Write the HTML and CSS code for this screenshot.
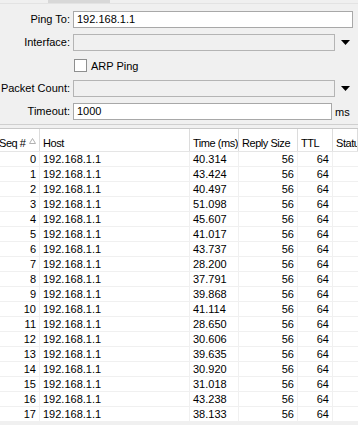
FILE: index.html
```html
<!DOCTYPE html>
<html>
<head>
<meta charset="utf-8">
<link rel="stylesheet" href="styles.css">
</head>
<body>
<div class="tabs"><div class="tab"></div></div>
<div class="form">
  <div class="lbl">Ping To:</div>
  <div class="field"><div class="input">192.168.1.1</div></div>

  <div class="lbl">Interface:</div>
  <div class="field"><div class="input disabled"></div><div class="dd"><svg width="9" height="5" viewBox="0 0 9 5"><path d="M0 0H9L4.5 5Z" fill="#000"/></svg></div></div>

  <div class="lbl"></div>
  <div class="field check"><span class="box"></span><span>ARP Ping</span></div>

  <div class="lbl">Packet Count:</div>
  <div class="field"><div class="input disabled"></div><div class="dd"><svg width="9" height="5" viewBox="0 0 9 5"><path d="M0 0H9L4.5 5Z" fill="#000"/></svg></div></div>

  <div class="lbl">Timeout:</div>
  <div class="field"><div class="input">1000</div><div class="unit">ms</div></div>
</div>
<div class="sep"></div>
<div class="list">
  <div class="row head">
    <div class="c seq">Seq #<svg class="sort" width="7" height="6" viewBox="0 0 7 6"><path d="M0.5 5.5H6.5L3.5 0.5Z" fill="none" stroke="#b0b0b0"/></svg></div>
    <div class="c host">Host</div>
    <div class="c time">Time (ms)</div>
    <div class="c size">Reply Size</div>
    <div class="c ttl">TTL</div>
    <div class="c status">Status</div>
  </div>
  <div class="row"><div class="c seq r">0</div><div class="c host">192.168.1.1</div><div class="c time">40.314</div><div class="c size r">56</div><div class="c ttl r">64</div><div class="c status"></div></div>
  <div class="row"><div class="c seq r">1</div><div class="c host">192.168.1.1</div><div class="c time">43.424</div><div class="c size r">56</div><div class="c ttl r">64</div><div class="c status"></div></div>
  <div class="row"><div class="c seq r">2</div><div class="c host">192.168.1.1</div><div class="c time">40.497</div><div class="c size r">56</div><div class="c ttl r">64</div><div class="c status"></div></div>
  <div class="row"><div class="c seq r">3</div><div class="c host">192.168.1.1</div><div class="c time">51.098</div><div class="c size r">56</div><div class="c ttl r">64</div><div class="c status"></div></div>
  <div class="row"><div class="c seq r">4</div><div class="c host">192.168.1.1</div><div class="c time">45.607</div><div class="c size r">56</div><div class="c ttl r">64</div><div class="c status"></div></div>
  <div class="row"><div class="c seq r">5</div><div class="c host">192.168.1.1</div><div class="c time">41.017</div><div class="c size r">56</div><div class="c ttl r">64</div><div class="c status"></div></div>
  <div class="row"><div class="c seq r">6</div><div class="c host">192.168.1.1</div><div class="c time">43.737</div><div class="c size r">56</div><div class="c ttl r">64</div><div class="c status"></div></div>
  <div class="row"><div class="c seq r">7</div><div class="c host">192.168.1.1</div><div class="c time">28.200</div><div class="c size r">56</div><div class="c ttl r">64</div><div class="c status"></div></div>
  <div class="row"><div class="c seq r">8</div><div class="c host">192.168.1.1</div><div class="c time">37.791</div><div class="c size r">56</div><div class="c ttl r">64</div><div class="c status"></div></div>
  <div class="row"><div class="c seq r">9</div><div class="c host">192.168.1.1</div><div class="c time">39.868</div><div class="c size r">56</div><div class="c ttl r">64</div><div class="c status"></div></div>
  <div class="row"><div class="c seq r">10</div><div class="c host">192.168.1.1</div><div class="c time">41.114</div><div class="c size r">56</div><div class="c ttl r">64</div><div class="c status"></div></div>
  <div class="row"><div class="c seq r">11</div><div class="c host">192.168.1.1</div><div class="c time">28.650</div><div class="c size r">56</div><div class="c ttl r">64</div><div class="c status"></div></div>
  <div class="row"><div class="c seq r">12</div><div class="c host">192.168.1.1</div><div class="c time">30.606</div><div class="c size r">56</div><div class="c ttl r">64</div><div class="c status"></div></div>
  <div class="row"><div class="c seq r">13</div><div class="c host">192.168.1.1</div><div class="c time">39.635</div><div class="c size r">56</div><div class="c ttl r">64</div><div class="c status"></div></div>
  <div class="row"><div class="c seq r">14</div><div class="c host">192.168.1.1</div><div class="c time">30.920</div><div class="c size r">56</div><div class="c ttl r">64</div><div class="c status"></div></div>
  <div class="row"><div class="c seq r">15</div><div class="c host">192.168.1.1</div><div class="c time">31.018</div><div class="c size r">56</div><div class="c ttl r">64</div><div class="c status"></div></div>
  <div class="row"><div class="c seq r">16</div><div class="c host">192.168.1.1</div><div class="c time">43.238</div><div class="c size r">56</div><div class="c ttl r">64</div><div class="c status"></div></div>
  <div class="row"><div class="c seq r">17</div><div class="c host">192.168.1.1</div><div class="c time">38.133</div><div class="c size r">56</div><div class="c ttl r">64</div><div class="c status"></div></div>
</div>
</body>
</html>
```
FILE: styles.css
```css
html, body {
  margin: 0;
  padding: 0;
  background: #f0f0f0;
  font-family: "Liberation Sans", Arial, sans-serif;
  font-size: 11px;
  color: #000;
  overflow: hidden;
}
.tabs {
  height: 3px;
  border-bottom: 1px solid #e3e3e3;
  padding-left: 48px;
}
.tab {
  width: 62px;
  height: 3px;
  background: #d8d8d8;
}
.form {
  display: grid;
  grid-template-columns: 70px 1fr;
  column-gap: 3px;
  row-gap: 6px;
  margin-top: 7px;
  padding-right: 5px;
}
.lbl {
  height: 17px;
  line-height: 17px;
  text-align: right;
  white-space: nowrap;
}
.field {
  display: flex;
  align-items: center;
  height: 17px;
}
.input {
  flex: 1;
  height: 15px;
  line-height: 15px;
  background: #fff;
  border: 1px solid #a8a8a8;
  padding-left: 3px;
  box-sizing: content-box;
}
.input.disabled {
  background: #f0f0f0;
  border-color: #b4b4b4;
}
.dd {
  width: 18px;
  display: flex;
  justify-content: flex-end;
  padding-right: 3px;
  box-sizing: border-box;
  padding-bottom: 1px;
}
.unit {
  width: 21px;
  padding-left: 3px;
  box-sizing: border-box;
  text-align: left;
}
.check {
  gap: 4px;
}
.box {
  width: 11px;
  height: 11px;
  background: #fff;
  border: 1px solid #8e8f8f;
  margin-left: 1px;
}
.sep {
  margin-top: 4px;
  height: 0;
  border-top: 1px solid #cfcfcf;
}
.list {
  margin-top: 3px;
  background: #fff;
  border-top: 1px solid #c8c8c8;
}
.row {
  display: flex;
  height: 15px;
  line-height: 14px;
  border-bottom: 1px solid #f0f0f0;
  box-sizing: border-box;
}
.row.head {
  height: 23px;
  line-height: 14px;
  padding-top: 7px;
  border-bottom: 1px solid #e5e5e5;
  background: #fff;
  letter-spacing: -0.45px;
}
.c {
  flex: none;
  box-sizing: border-box;
  border-right: 1px solid #f0f0f0;
  padding: 0 3px;
  white-space: nowrap;
  overflow: hidden;
}
.head .c {
  border-right: 1px solid #dcdcdc;
  margin-top: -7px;
  padding-top: 7px;
}
.r { text-align: right; }
.seq { width: 40px; }
.head .seq { padding-left: 0; margin-left: -1px; width: 41px; }
.sort { margin-left: 3px; vertical-align: 3px; }
.host { width: 150px; }
.time { width: 49px; }
.size { width: 59px; }
.ttl { width: 35px; }
.status { flex: 1; border-right: none; }
```
